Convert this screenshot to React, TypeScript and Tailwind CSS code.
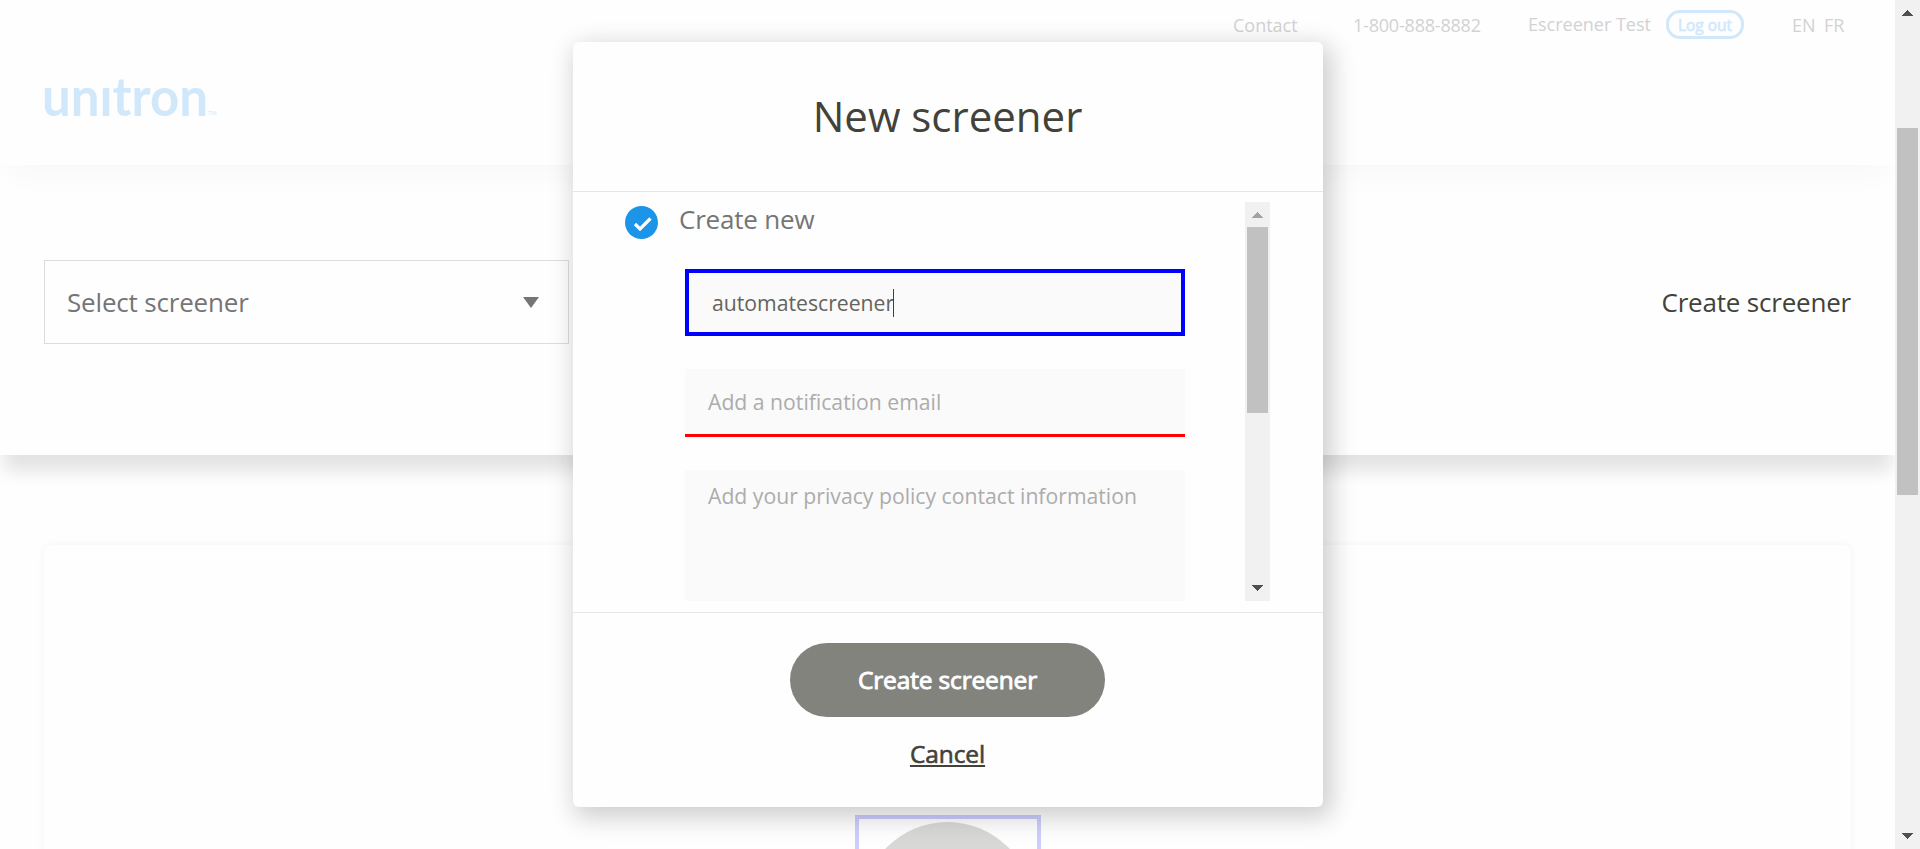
import React from "react";

function Arrow({ up, className }: { up?: boolean; className: string }) {
  return (
    <svg viewBox="0 0 12 6" className={className} fill="currentColor" preserveAspectRatio="none" shapeRendering="crispEdges">
      <path d={up ? "M0 6L6 0L12 6Z" : "M0 0L6 6L12 0Z"} />
    </svg>
  );
}

function Logo() {
  return (
    <svg width="190" height="80" viewBox="-8 -18 190 80" className="-ml-2 mt-[8px] block" fill="#d1e8fb" role="img" aria-label="unitron">
      <text x="-2" y="41" fontFamily="Lato, sans-serif" fontWeight="700" fontSize="54" textLength="166" lengthAdjust="spacingAndGlyphs">
        unıtron
      </text>
      <text x="164" y="40" fontFamily="'Open Sans', sans-serif" fontSize="6">
        TM
      </text>
    </svg>
  );
}

function Header() {
  return (
    <header className="relative h-[165px] shrink-0 pl-11 shadow-[0_20px_26px_-10px_#f8f8f8]">
      <div className="flex h-[49px] items-center justify-end pr-[50px] text-[18px] leading-none whitespace-nowrap text-[#d2d2d2]">
        <span className="w-[120px]">Contact</span>
        <span className="w-[175px] tracking-[-0.2px]">1-800-888-8882</span>
        <span className="w-[138px] pb-[2px]">Escreener Test</span>
        <span className="mr-[48px] flex h-[29px] w-[78px] items-center justify-center rounded-[14px] border-[3px] border-[#d1e8fb] pt-[2px] text-[15.5px] text-[#d1e8fb] [-webkit-text-stroke:0.6px_#d1e8fb]">
          Log out
        </span>
        <span className="w-[32px]">EN</span>
        <span className="w-[21px]">FR</span>
      </div>
      <Logo />
    </header>
  );
}

function Toolbar() {
  return (
    <section className="relative flex h-[290px] shrink-0 items-start justify-between pt-[95px] pr-[44px] pl-11 shadow-[0_20px_16px_-4px_#e3e3e3]">
      <div className="flex h-[84px] w-[525px] items-center justify-between border border-[#dcdcdc] pr-[29px] pl-[22px] text-[26px] tracking-[-0.18px] text-[#757575]">
        <span>Select screener</span>
        <svg viewBox="0 0 16 11" className="h-[11px] w-4" fill="#757575">
          <path d="M0 0H16L8 11Z" />
        </svg>
      </div>
      <span className="flex h-[84px] items-center text-[26px] tracking-[-0.2px] text-[#42423a]">Create screener</span>
    </section>
  );
}

function Modal() {
  return (
    <div className="absolute top-[42px] left-[573px] flex h-[765px] w-[750px] flex-col rounded-md bg-[#fefefe] shadow-[5px_7px_25px_4px_rgba(0,0,0,0.19)]">
      <h1 className="flex h-[149px] items-center justify-center pr-px pb-[2px] text-[42px] text-[#42423a]">New screener</h1>
      <div className="flex h-[422px] border-y border-[#e6e6e6] py-[10px] pr-[53px] pl-[52px]">
        <div className="flex h-[399px] flex-1 flex-col overflow-hidden">
          <div className="flex h-[67px] shrink-0 items-start">
            <svg viewBox="0 0 33 33" className="mt-1 h-[33px] w-[33px]">
              <circle cx="16.5" cy="16.5" r="16.5" fill="#1c94e8" />
              <path d="M10 18l5 5L25.500 12.500" fill="none" stroke="#fff" strokeWidth="3.2" />
            </svg>
            <span className="ml-[21px] text-[26px] leading-[34px] tracking-[-0.2px] text-[#757575]">Create new</span>
          </div>
          <div className="ml-[60px] flex w-[500px] flex-col">
            <div className="flex h-[67px] items-center border-4 border-[#0000ff] bg-[#fafafa] pl-[23px] text-[21.2px] text-[#64645d]">
              <span>automatescreener</span>
              <span className="-ml-px h-7 w-px bg-[#42423a]" />
            </div>
            <div className="mt-[33px] flex h-[68px] items-center border-b-[3px] border-[#ff0000] bg-[#fafafa] pl-[23px] text-[21.2px] text-[#acacac]">
              Add a notification email
            </div>
            <div className="mt-[33px] h-[140px] bg-[#fafafa] pt-[11px] pl-[23px] text-[21.2px] leading-[30px] text-[#acacac]">
              Add your privacy policy contact information
            </div>
          </div>
        </div>
        <div className="flex h-[399px] w-[25px] flex-col items-center bg-[#f1f1f1]">
          <Arrow up className="mt-[10px] h-[6px] w-[11px] text-[#a3a3a3]" />
          <div className="mt-[9px] h-[186px] w-[21px] bg-[#c1c1c1]" />
          <Arrow className="mt-auto mb-[10px] h-[6px] w-[11px] text-[#505050]" />
        </div>
      </div>
      <div className="flex flex-col items-center pt-[30px] pr-px">
        <button className="h-[74px] w-[315px] rounded-full bg-[#82837d] pt-px text-[24.5px] tracking-[-0.15px] text-white [-webkit-text-stroke:0.9px_white]">
          Create screener
        </button>
        <a className="mt-[20px] text-[24.5px] leading-[34px] tracking-[-0.1px] text-[#42423a] underline [-webkit-text-stroke:0.6px_#42423a]">Cancel</a>
      </div>
    </div>
  );
}

export default function App() {
  return (
    <div className="relative flex h-[849px] w-[1920px] overflow-hidden bg-[#fefefe] font-['Open_Sans',sans-serif]">
      <div className="flex w-[1895px] flex-col overflow-hidden">
        <Header />
        <Toolbar />
        <main className="mx-11 mt-[90px] flex h-[400px] shrink-0 justify-center rounded-lg bg-[#fefefe] shadow-[0_0_8px_#f4f4f4]">
          <div className="mt-[270px] flex h-[180px] w-[186px] justify-center border-4 border-[#ccccff] pt-[3px]">
            <div className="h-[171px] w-[171px] shrink-0 rounded-full bg-[#d8d8d7]" />
          </div>
        </main>
      </div>
      <div className="flex w-[25px] flex-col items-center bg-[#f1f1f1]">
        <Arrow up className="mt-[10px] h-[6px] w-[11px] text-[#505050]" />
        <div className="mt-[112px] h-[367px] w-[21px] bg-[#c1c1c1]" />
        <Arrow className="mt-auto mb-[10px] h-[6px] w-[11px] text-[#505050]" />
      </div>
      <Modal />
    </div>
  );
}
